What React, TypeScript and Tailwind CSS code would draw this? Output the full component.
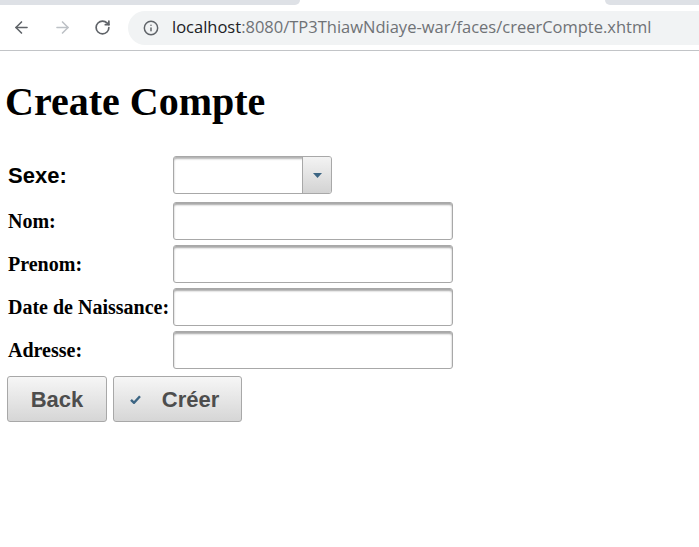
// Create Compte — JSF form page inside a Chrome window frame
import { ArrowLeft, ArrowRight, RotateCw, Info } from 'lucide-react'

function BrowserBar() {
  return (
    <div className="bg-white">
      {/* tab strip remnant */}
      <div className="flex h-[5px]">
        <div className="w-[300px] bg-[#dee1e6] rounded-br-[6px]" />
        <div className="w-[305px] bg-white" />
        <div className="flex-1 bg-[#dee1e6] rounded-bl-[6px]" />
      </div>
      <div className="flex items-center h-[46px] border-b border-[#c2c4c7]">
        <div className="flex items-center w-[128px] pl-[12px] gap-[22px] text-[#5f6368]">
          <ArrowLeft size={19} strokeWidth={2} />
          <ArrowRight size={19} strokeWidth={2} className="text-[#bdc1c6]" />
          <RotateCw size={17} strokeWidth={2.4} />
        </div>
        <div className="flex items-center flex-1 h-[34px] rounded-l-full bg-[#f1f3f4] pl-[15px]">
          <Info size={16} strokeWidth={2.2} className="text-[#5f6368]" />
          <div className="ml-[13px] text-[16.5px] font-['Open_Sans',sans-serif] whitespace-nowrap">
            <span className="text-[#202124]">localhost</span>
            <span className="text-[#6f7276]">:8080/TP3ThiawNdiaye-war/faces/creerCompte.xhtml</span>
          </div>
        </div>
      </div>
    </div>
  )
}

function Field({ label, sans }: { label: string; sans?: boolean }) {
  return (
    <div className="w-[168px] pl-[3px]">
      <span
        className={
          sans
            ? "font-['Liberation_Sans',Arial,sans-serif] font-bold text-[22px] text-black"
            : "font-['Liberation_Serif','Times_New_Roman',serif] font-bold text-[20px] text-black"
        }
      >
        {label}
      </span>
    </div>
  )
}

function TextInput() {
  return (
    <input
      type="text"
      className="w-[280px] h-[38px] bg-white border border-[#a8a8a8] rounded-[3px] shadow-[inset_0_2px_2px_rgba(0,0,0,0.35)] outline-none"
    />
  )
}

function Button({ children, width }: { children: React.ReactNode; width: string }) {
  return (
    <button
      className={`${width} h-[46px] flex items-center justify-center border border-[#a8a8a8] rounded-[3px] bg-[linear-gradient(#f6f6f6,#d6d6d6)] font-['Liberation_Sans',Arial,sans-serif] font-bold text-[22px] text-[#4d4d4d]`}
    >
      {children}
    </button>
  )
}

export default function App() {
  return (
    <div className="w-[699px] h-[547px] bg-white overflow-hidden">
      <BrowserBar />
      <div className="pl-[5px]">
        <h1 className="mt-[29px] text-[40px] leading-[44px] font-bold font-['Liberation_Serif','Times_New_Roman',serif] text-black">
          Create Compte
        </h1>

        <div className="flex items-center mt-[32px]">
          <Field label="Sexe:" sans />
          <div className="flex w-[159px] h-[38px] border border-[#a8a8a8] rounded-[3px] bg-white shadow-[inset_0_2px_2px_rgba(0,0,0,0.3)] overflow-hidden">
            <div className="flex-1" />
            <div className="w-[29px] flex items-center justify-center border-l border-[#a8a8a8] bg-[linear-gradient(#f3f3f3,#d3d3d3)]">
              <svg width="9" height="5" viewBox="0 0 9 5">
                <path d="M0 0h9L4.5 5z" fill="#3c6583" />
              </svg>
            </div>
          </div>
        </div>

        <div className="flex items-center mt-[8px]">
          <Field label="Nom:" />
          <TextInput />
        </div>
        <div className="flex items-center mt-[5px]">
          <Field label="Prenom:" />
          <TextInput />
        </div>
        <div className="flex items-center mt-[5px]">
          <Field label="Date de Naissance:" />
          <TextInput />
        </div>
        <div className="flex items-center mt-[5px]">
          <Field label="Adresse:" />
          <TextInput />
        </div>

        <div className="flex gap-[6px] mt-[7px] ml-[2px]">
          <Button width="w-[100px]">Back</Button>
          <Button width="w-[129px]">
            <svg width="11" height="9" viewBox="0 0 11 9" className="mr-[21px] ml-[-6px]">
              <path d="M1 4.8l3 3L10 1.2" stroke="#3c6583" strokeWidth="2.4" fill="none" />
            </svg>
            Créer
          </Button>
        </div>
      </div>
    </div>
  )
}
